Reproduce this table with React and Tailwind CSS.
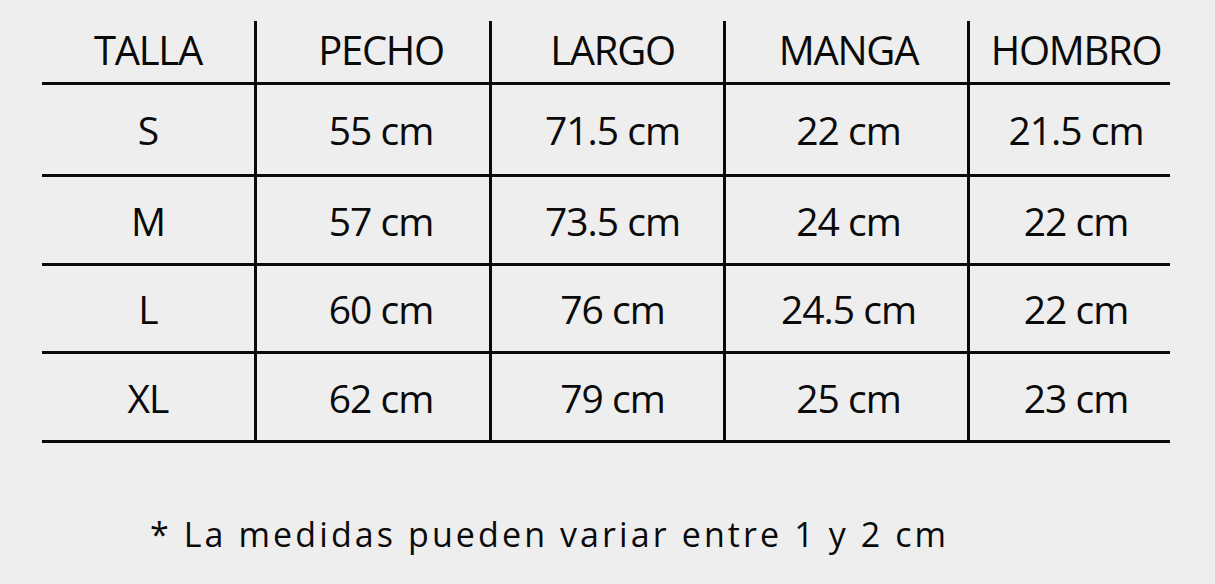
import React from "react";

const COLUMNS = [
  { label: "TALLA", width: "w-[212px]", pad: "" },
  { label: "PECHO", width: "w-[235px]", pad: "pl-4" },
  { label: "LARGO", width: "w-[234px]", pad: "pl-2.5" },
  { label: "MANGA", width: "w-[244px]", pad: "pl-1" },
  { label: "HOMBRO", width: "w-[203px]", pad: "pl-3" },
];

const ROWS = [
  { h: "h-[92px]", cells: ["S", "55 cm", "71.5 cm", "22 cm", "21.5 cm"] },
  { h: "h-[89px]", cells: ["M", "57 cm", "73.5 cm", "24 cm", "22 cm"] },
  { h: "h-[88px]", cells: ["L", "60 cm", "76 cm", "24.5 cm", "22 cm"] },
  { h: "h-[89px]", cells: ["XL", "62 cm", "79 cm", "25 cm", "23 cm"] },
];

const Row = ({ cells, height, textClass }) => (
  <div className={`flex ${height} border-b-[3px] border-[#0a0a0a]`}>
    {cells.map((text, i) => (
      <div
        key={i}
        className={`${COLUMNS[i].width} ${COLUMNS[i].pad} flex items-center justify-center ${
          i > 0 ? "border-l-[3px] border-[#0a0a0a]" : ""
        }`}
      >
        <span className={textClass}>{text}</span>
      </div>
    ))}
  </div>
);

export default function App() {
  return (
    <div
      className="w-[1215px] h-[584px] bg-[#eeeeee] text-[#0a0a0a] pt-[21px] pl-[42px]"
      style={{ fontFamily: '"Open Sans", "Noto Sans", sans-serif' }}
    >
      {/* Size table */}
      <div className="w-[1128px] flex flex-col">
        <Row
          cells={COLUMNS.map((c) => c.label)}
          height="h-[64px]"
          textClass="text-[40px] leading-none tracking-[-1.3px] pb-[4px]"
        />
        {ROWS.map((row) => (
          <Row
            key={row.cells[0]}
            cells={row.cells}
            height={row.h}
            textClass="text-[39px] leading-none tracking-[-1px]"
          />
        ))}
      </div>

      {/* Note */}
      <p className="mt-[67px] pl-[108px] text-[34px] leading-[48px] tracking-[3.1px]">
        * La medidas pueden variar entre 1 y 2 cm
      </p>
    </div>
  );
}
